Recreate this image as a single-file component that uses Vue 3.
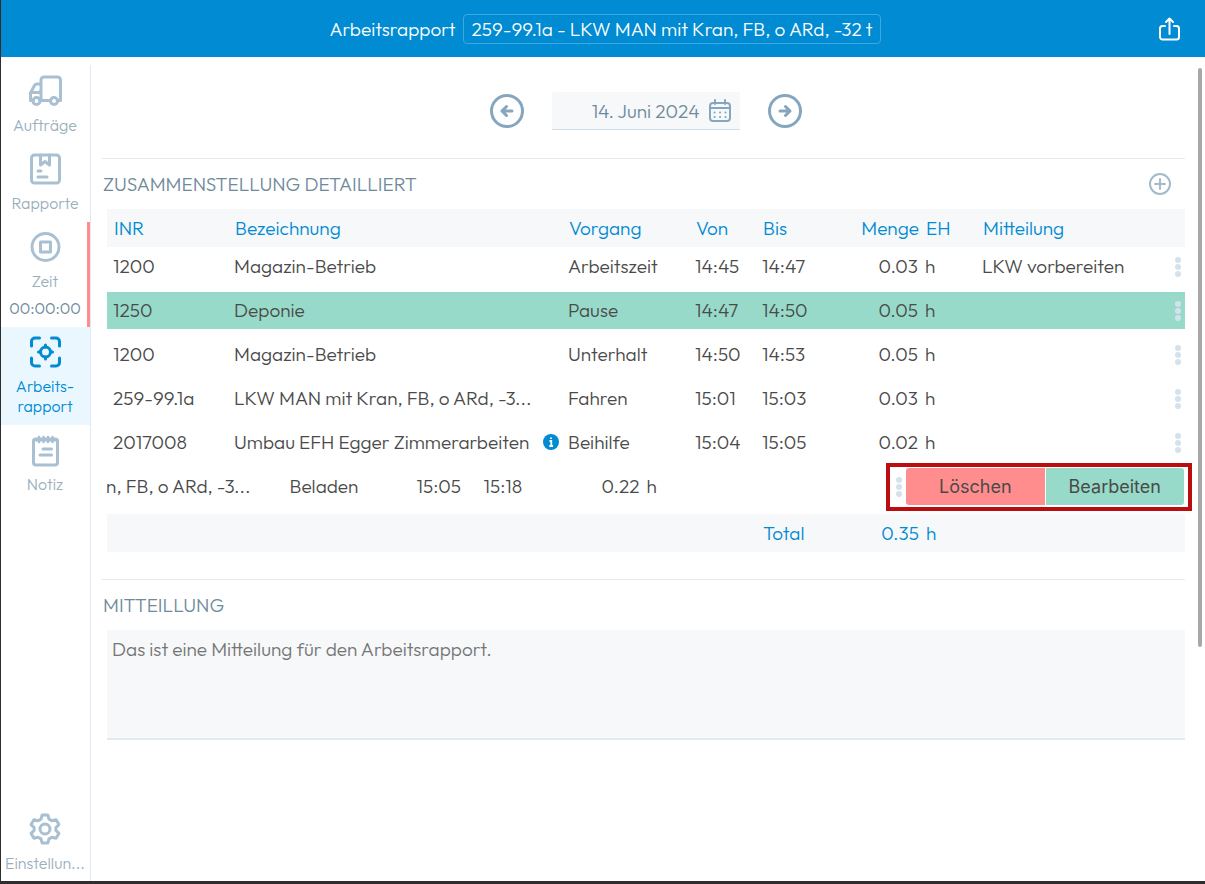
<script setup>
import { ref } from 'vue'

const day = ref('14. Juni 2024')
const message = ref('Das ist eine Mitteilung für den Arbeitsrapport.')

const rows = [
  { inr: '1200', name: 'Magazin-Betrieb', task: 'Arbeitszeit', from: '14:45', to: '14:47', amount: '0.03', unit: 'h', note: 'LKW vorbereiten' },
  { inr: '1250', name: 'Deponie', task: 'Pause', from: '14:47', to: '14:50', amount: '0.05', unit: 'h', pause: true },
  { inr: '1200', name: 'Magazin-Betrieb', task: 'Unterhalt', from: '14:50', to: '14:53', amount: '0.05', unit: 'h' },
  { inr: '259-99.1a', name: 'LKW MAN mit Kran, FB, o ARd, -3...', task: 'Fahren', from: '15:01', to: '15:03', amount: '0.03', unit: 'h' },
  { inr: '2017008', name: 'Umbau EFH Egger Zimmerarbeiten', task: 'Beihilfe', from: '15:04', to: '15:05', amount: '0.02', unit: 'h', info: true },
  { inr: '259-99.1a', name: 'an, FB, o ARd, -3...', task: 'Beladen', from: '15:05', to: '15:18', amount: '0.22', unit: 'h', open: true },
]
</script>

<template>
  <div class="app">
    <header class="topbar">
      <span></span>
      <div class="heading">
        <h1>Arbeitsrapport</h1>
        <button type="button" class="vehicle">259-99.1a - LKW MAN mit Kran, FB, o ARd, -32 t</button>
      </div>
      <button type="button" class="share" aria-label="Teilen">
        <svg width="22" height="24" viewBox="0 0 22 24" fill="none" stroke="currentColor" stroke-width="2" stroke-linecap="round" stroke-linejoin="round">
          <path d="M6 9H3.500a2.500 2.500 0 0 0-2.500 2.500V20a2.500 2.500 0 0 0 2.500 2.500h14a2.500 2.500 0 0 0 2.500-2.500v-8.500A2.500 2.500 0 0 0 17.500 9H15M10.500 17V2M7 5l3.500-3.500L14 5" />
        </svg>
      </button>
    </header>

    <div class="body">
      <nav class="sidebar">
        <a href="#auftraege" class="item">
          <svg class="icon" viewBox="0 0 34 34">
            <path d="M5 26.500H2.500V19l4-7.500a3 3 0 0 1 2.500-1.500h4M22 26.500H12M30 26.500h2.500V6a3 3 0 0 0-3-3H16a3 3 0 0 0-3 3v20M3 18.500h7a3 3 0 0 0 3-3" />
            <circle cx="8.500" cy="27" r="3.500" /><circle cx="26" cy="27" r="3.500" />
          </svg>
          <span>Aufträge</span>
        </a>
        <a href="#rapporte" class="item">
          <svg class="icon" viewBox="0 0 34 34">
            <rect x="3.500" y="3" width="28" height="28" rx="3" />
            <path d="M12.500 3v10l4.500-3.500 4.500 3.500V3M10 19h3M10 25h9" />
          </svg>
          <span>Rapporte</span>
        </a>
        <a href="#zeit" class="item running">
          <svg class="icon" viewBox="0 0 34 34">
            <circle cx="17.500" cy="17" r="13.500" />
            <rect x="12.500" y="12" width="10" height="10" />
          </svg>
          <span>Zeit</span>
          <span class="timer">00:00:00</span>
        </a>
        <a href="#arbeitsrapport" class="item active" aria-current="page">
          <svg class="icon" viewBox="0 0 34 34">
            <path d="M3.500 11V6.500a3.500 3.500 0 0 1 3.500-3.500h4.500M23.500 3H28a3.500 3.500 0 0 1 3.500 3.500V11M31.500 23v4.500A3.500 3.500 0 0 1 28 31h-4.500M11.500 31H7a3.500 3.500 0 0 1-3.500-3.500V23" />
            <circle cx="17.500" cy="17" r="5" />
            <path d="M17.500 10v2M17.500 22v2M10.500 17h2M22.500 17h2" />
          </svg>
          <span>Arbeits-<br />rapport</span>
        </a>
        <a href="#notiz" class="item">
          <svg class="icon" viewBox="0 0 34 34">
            <rect x="5.500" y="6" width="24" height="26" rx="2.500" />
            <path d="M6 7h23" />
            <path d="M11 4v5M15.500 4v5M20 4v5M24.500 4v5" stroke-width="2.500" />
            <path d="M15 16h8.500M12 22h11.500" />
          </svg>
          <span>Notiz</span>
        </a>
        <a href="#einstellungen" class="item last">
          <svg class="icon" viewBox="0 0 34 34">
            <path d="M14.200 3h5.600l1.200 4.100 2.900 1.700 4.200-1 2.800 4.800-3 3v2.800l3 3-2.800 4.800-4.200-1-2.900 1.700-1.200 4.100h-5.600L13 26.900l-2.900-1.700-4.200 1-2.800-4.800 3-3v-2.800l-3-3 2.800-4.800 4.200 1L13 7.100z" />
            <circle cx="17" cy="17" r="5" />
          </svg>
          <span>Einstellun...</span>
        </a>
      </nav>

      <main class="content">
        <div class="daybar">
          <button type="button" class="round" aria-label="Vorheriger Tag">
            <svg width="34" height="34" viewBox="0 0 34 34">
              <circle cx="17" cy="17" r="15.500" />
              <path d="M22 17H12M16.500 12.500 12 17l4.500 4.500" />
            </svg>
          </button>
          <label class="dayfield">
            <input v-model="day" type="text" aria-label="Datum" />
            <svg width="24" height="24" viewBox="0 0 24 24">
              <rect x="2" y="4" width="20" height="18" rx="3" stroke-width="2" />
              <path d="M2 9h20M7 1v4M17 1v4" stroke-width="2" />
              <path d="M6.500 13.500h.1M12 13.500h.1M17.500 13.500h.1M6.500 18h.1M12 18h.1M17.500 18h.1" stroke-width="2" />
            </svg>
          </label>
          <button type="button" class="round" aria-label="Nächster Tag">
            <svg width="34" height="34" viewBox="0 0 34 34">
              <circle cx="17" cy="17" r="15.500" />
              <path d="M12 17h10M17.500 12.500 22 17l-4.500 4.500" />
            </svg>
          </button>
        </div>

        <section class="section">
          <div class="title">
            <h2>ZUSAMMENSTELLUNG DETAILLIERT</h2>
            <button type="button" class="add" aria-label="Eintrag hinzufügen">
              <svg width="24" height="24" viewBox="0 0 24 24">
                <circle cx="12" cy="12" r="10" stroke-width="2" />
                <path d="M12 7v10M7 12h10" stroke-width="2" />
              </svg>
            </button>
          </div>
          <table>
            <thead>
              <tr>
                <th>INR</th>
                <th>Bezeichnung</th>
                <th>Vorgang</th>
                <th>Von</th>
                <th>Bis</th>
                <th class="num">Menge</th>
                <th>EH</th>
                <th>Mitteilung</th>
              </tr>
            </thead>
            <tbody>
              <tr v-for="(row, i) in rows" :key="i" :class="{ pause: row.pause, open: row.open }">
                <td v-if="!row.open">{{ row.inr }}</td>
                <td class="name">
                  <span>{{ row.name }}</span>
                  <svg v-if="row.info" class="info" width="16" height="16" viewBox="0 0 16 16">
                    <circle cx="8" cy="8" r="8" fill="#008bd2" />
                    <path d="M8 3.500v1.500M6.500 7H8.300v5M6.300 12h3.700" fill="none" stroke="#fff" stroke-width="1.800" />
                  </svg>
                </td>
                <td>{{ row.task }}</td>
                <td>{{ row.from }}</td>
                <td>{{ row.to }}</td>
                <td class="num">{{ row.amount }}</td>
                <td>{{ row.unit }}</td>
                <td>{{ row.note }}</td>
                <td class="menu">
                  <button type="button" aria-label="Aktionen">
                    <svg width="6" height="20" viewBox="0 0 6 20">
                      <circle cx="3" cy="3" r="3" /><circle cx="3" cy="10" r="3" /><circle cx="3" cy="17" r="3" />
                    </svg>
                  </button>
                </td>
                <td v-if="row.open" class="actions">
                  <button type="button" class="delete">Löschen</button>
                  <button type="button" class="edit">Bearbeiten</button>
                </td>
              </tr>
            </tbody>
            <tfoot>
              <tr>
                <td class="total">Total</td>
                <td class="num">0.35</td>
                <td>h</td>
              </tr>
            </tfoot>
          </table>
        </section>

        <section class="section">
          <div class="title">
            <h2 id="message-title">MITTEILLUNG</h2>
          </div>
          <textarea v-model="message" aria-labelledby="message-title"></textarea>
        </section>
        <div class="scrollthumb" aria-hidden="true"></div>
      </main>
    </div>
  </div>
</template>

<style>
body {
  margin: 0;
  background: #fff;
}
</style>

<style scoped>
.app {
  box-sizing: border-box;
  min-height: 100vh;
  display: flex;
  flex-direction: column;
  border-left: 1px solid #302d2e;
  border-bottom: 3px solid #302d2e;
  font-family: Outfit, Lato, sans-serif;
  font-size: 19px;
  font-weight: 350;
  line-height: 24px;
  color: #4a4a4a;
}
button,
input,
textarea {
  font: inherit;
  color: inherit;
  border: 0;
  margin: 0;
  padding: 0;
  background: none;
  border-radius: 0;
}
button {
  cursor: pointer;
}
svg {
  display: block;
  flex: none;
}
h1,
h2 {
  margin: 0;
  font-size: 19px;
  font-weight: 350;
}

.topbar {
  display: grid;
  grid-template-columns: 1fr auto 1fr;
  align-items: center;
  height: 57px;
  padding-left: 4px;
  background: #008bd2;
  color: #fff;
}
.heading {
  display: flex;
  align-items: center;
  gap: 8px;
}
.vehicle {
  height: 30px;
  padding: 0 7px;
  border: 1px solid #3aa9e2;
  border-radius: 4px;
}
.share {
  justify-self: end;
  margin-right: 24px;
}

.body {
  flex: 1;
  display: flex;
}
.sidebar {
  flex: none;
  box-sizing: border-box;
  width: 90px;
  margin-top: 8px;
  padding-top: 1px;
  border-right: 1px solid #deebf5;
  display: flex;
  flex-direction: column;
}
.item {
  display: flex;
  flex-direction: column;
  align-items: center;
  gap: 7px;
  padding: 8px 1px 9px 0;
  font-size: 16px;
  line-height: 20px;
  text-align: center;
  text-decoration: none;
  color: #9bb0be;
}
.icon {
  width: 34px;
  height: 34px;
  fill: none;
  stroke: #a9c0d2;
  stroke-width: 3;
  stroke-linecap: round;
  stroke-linejoin: round;
}
.running {
  border-right: 3px solid #ff8d8d;
  padding-left: 2px;
  padding-right: 0;
}
.timer {
  color: #6f8a9b;
}
.active {
  background: #ebf7ff;
  color: #008bd2;
}
.active .icon {
  stroke: #008bd2;
}
.last {
  margin-top: auto;
  padding-bottom: 8px;
}

.content {
  position: relative;
  flex: 1;
  min-width: 0;
  padding: 35px 20px 0 11px;
}
.daybar {
  display: flex;
  justify-content: center;
  align-items: center;
  gap: 28px;
  padding-left: 4px;
  margin-bottom: 28px;
}
.round svg,
.add svg,
.dayfield svg {
  fill: none;
  stroke: #86a6be;
  stroke-linecap: round;
  stroke-linejoin: round;
}
.round svg {
  stroke-width: 3;
}
.dayfield {
  box-sizing: border-box;
  width: 188px;
  height: 38px;
  padding-right: 8px;
  display: flex;
  align-items: center;
  gap: 8px;
  background: #f6f8fa;
  border-bottom: 1px solid #cfe0eb;
  border-radius: 2px 2px 0 0;
}
.dayfield input {
  flex: 1;
  min-width: 0;
  text-align: right;
  color: #6f8a9b;
}

.section {
  border-top: 1px solid #e2ebf1;
  margin-bottom: 27px;
}
.title {
  display: flex;
  align-items: center;
  justify-content: space-between;
  height: 50px;
  padding: 0 13px 0 1px;
}
h2 {
  color: #6f8a9b;
}
.add svg {
  stroke: #a3bacb;
}

table,
thead,
tbody,
tfoot {
  display: block;
}
table {
  margin-left: 5px;
}
tr {
  --tail: 127px 67px 67px 96px 57px minmax(0, 191fr) 18px;
  display: grid;
  grid-template-columns: 121px minmax(0, 334fr) var(--tail);
  align-items: center;
  height: 37px;
}
th,
td {
  padding: 0 0 0 6px;
  font-weight: inherit;
  text-align: left;
  white-space: nowrap;
}
.num {
  text-align: right;
}
tbody td {
  padding-bottom: 1px;
}
tbody .num {
  padding-right: 1px;
}
thead tr,
tfoot tr {
  height: 38px;
  background: #f6f8fa;
  color: #008bd2;
}
th,
tfoot td {
  padding-left: 7px;
}
.total {
  grid-column: 5;
}
tbody {
  padding: 1px 0 9px;
}
tbody tr + tr {
  margin-top: 7px;
}
.pause {
  background: #98dac9;
}
tbody .name {
  display: flex;
  align-items: center;
  justify-content: space-between;
  padding-right: 3px;
}
tbody .menu {
  justify-self: end;
  padding: 0 4px 0 0;
}
.menu button {
  display: block;
}
.menu svg {
  fill: #d3e2ec;
}
.open {
  grid-template-columns: minmax(0, 177fr) var(--tail) 279px;
}
.open .name {
  justify-content: flex-end;
  padding-left: 0;
  padding-right: 33px;
  overflow: hidden;
}
tbody .actions {
  position: relative;
  display: flex;
  gap: 1px;
  padding: 0 1px 0 0;
  height: 37px;
}
.actions::after {
  content: '';
  position: absolute;
  inset: -5px -7px -6px -20px;
  border: 4px solid #b90d0f;
  pointer-events: none;
}
.actions button {
  flex: 1;
  font-family: Inter, sans-serif;
  font-size: 18px;
  font-weight: 400;
}
.actions .delete {
  background: #ff8d8d;
  border-radius: 3px 0 0 3px;
}
.actions .edit {
  background: #98dac9;
  border-radius: 0 3px 3px 0;
}

textarea {
  display: block;
  box-sizing: border-box;
  width: calc(100% - 5px);
  height: 110px;
  margin-left: 5px;
  padding: 7px 5px;
  background: #f6f8fa;
  border-bottom: 2px solid #e0eaf1;
  color: #757575;
  resize: none;
  outline: none;
}
.scrollthumb {
  position: absolute;
  top: 11px;
  right: 3px;
  width: 4px;
  height: 579px;
  border-radius: 2px;
  background: #a8a8a8;
}
</style>
